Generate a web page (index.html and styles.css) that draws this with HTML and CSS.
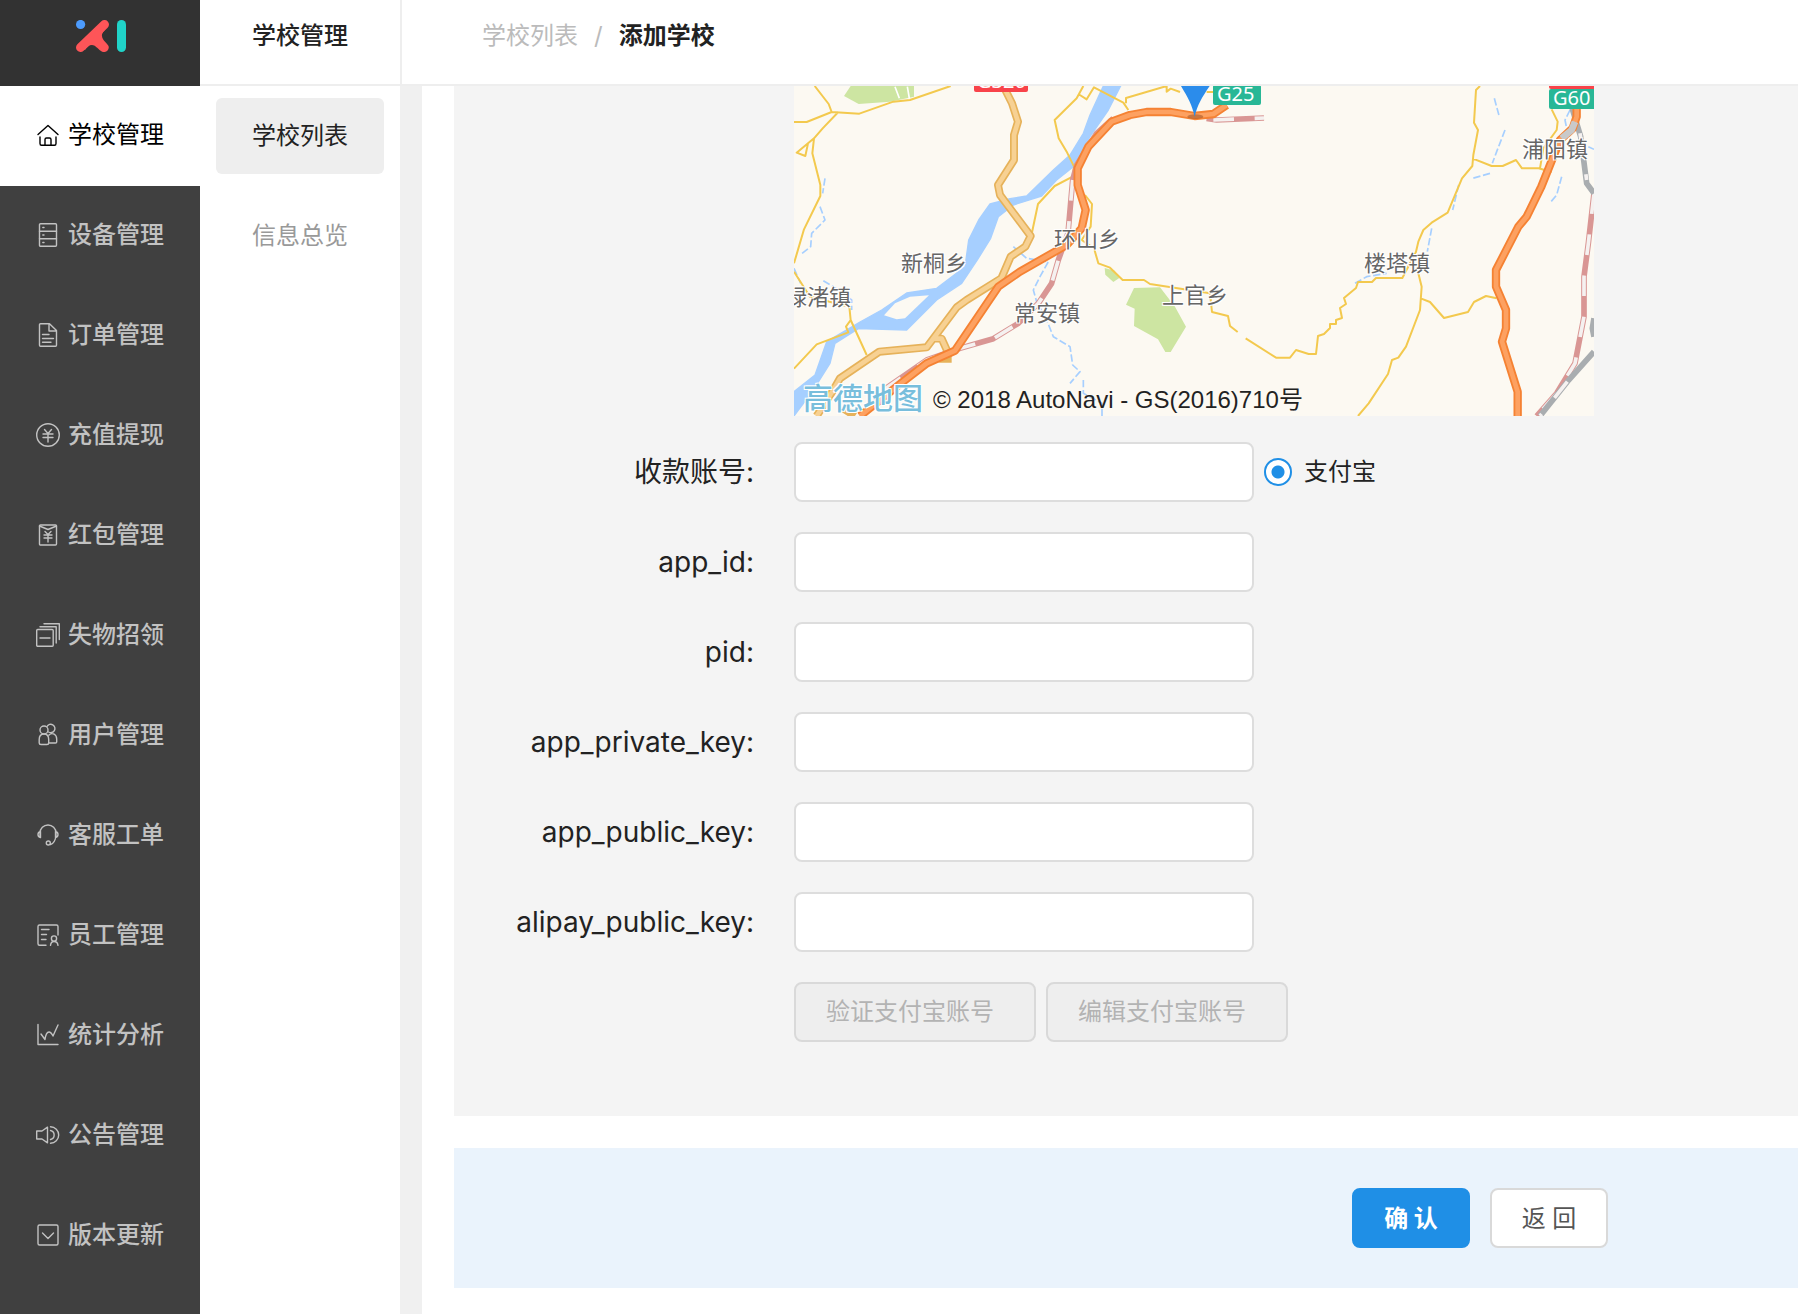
FILE: index.html
```html
<!DOCTYPE html>
<html lang="zh-CN">
<head>
<meta charset="utf-8">
<meta name="viewport" content="width=device-width, initial-scale=1">
<title>添加学校</title>
<link rel="stylesheet" href="styles.css">
</head>
<body>
<div class="app">
  <aside class="sidebar">
    <a class="logo" href="#" aria-label="首页">
      <svg width="50" height="32" viewBox="0 0 50 32">
        <circle cx="4.600" cy="4.500" r="4.600" fill="#4c9bfd"/>
        <path d="M4.500 27.500L28.500 4.500" fill="none" stroke="#fe5558" stroke-width="9" stroke-linecap="round"/>
        <path d="M20 12L29 5C33 8 25 12 26 16C26 20 32 24 32.500 26C34 30 29 34 25 31C21 28 19 25 16 25C13 25 11 27 9 30L5 27Z" fill="#fe5558"/>
        <rect x="41" y="0" width="9" height="32" rx="4.500" fill="#20d3c8"/>
      </svg>
    </a>
    <nav class="menu" aria-label="主菜单">
      <a class="menu-item is-active" href="#"><svg class="icon" viewBox="0 0 24 24"><path d="M2 11.500L12 2.500L22 11.500M4 14V20.500Q4 22.300 5.500 22.300H18.500Q20 22.300 20 20.500V14M9 22V16.500Q9 15 10.500 15H13.500Q15 15 15 16.500V22"/></svg>学校管理</a>
      <a class="menu-item" href="#"><svg class="icon" viewBox="0 0 24 24"><rect x="3.500" y=".7" width="17" height="22.600" rx="1"/><path d="M3.500 8.300H20.500M3.500 15.800H20.500M6.800 4.500H8M6.800 12H8M6.800 19.500H8"/></svg>设备管理</a>
      <a class="menu-item" href="#"><svg class="icon" viewBox="0 0 24 24"><path d="M13.500.7H4.500Q3.500.7 3.500 1.700V22.300Q3.500 23.300 4.500 23.300H19.500Q20.500 23.300 20.500 22.300V7.500ZM13 1V8H20.500M6.500 11.500H13M6.500 15.500H17.500M6.500 19.200H15"/></svg>订单管理</a>
      <a class="menu-item" href="#"><svg class="icon" viewBox="0 0 24 24"><circle cx="12" cy="12" r="11.300"/><path d="M8.500 6.500L12 10.500L15.500 6.500M7 11H17M7 14.500H17M12 10.500V19"/></svg>充值提现</a>
      <a class="menu-item" href="#"><svg class="icon" viewBox="0 0 24 24"><rect x="3.500" y="2" width="17" height="20" rx="1"/><path d="M3.500 3L12 6.500L20.500 3M9 8.500L12 11.500L15 8.500M8 12H16M8 15H16M12 11.500V19"/></svg>红包管理</a>
      <a class="menu-item" href="#"><svg class="icon" viewBox="0 0 24 24"><rect x=".7" y="6.500" width="16.500" height="16.700" rx="1"/><path d="M4 15H14M4 3.800H20.200V20M8 .7H23.300V16.500"/></svg>失物招领</a>
      <a class="menu-item" href="#"><svg class="icon" viewBox="0 0 24 24"><circle cx="8" cy="7" r="4"/><path d="M11 3.500A4.200 4.200 0 1 1 12.500 9M3.200 20V16.500Q3.200 11 8 11Q12.700 11 12.700 16.500V20Q12.700 21.500 11 21.500H5Q3.200 21.500 3.200 20ZM13 12Q15 10 18 11Q20.700 12.500 20.700 16V19Q20.700 20 19.500 20H13"/></svg>用户管理</a>
      <a class="menu-item" href="#"><svg class="icon" viewBox="0 0 24 24"><path d="M4 13V10A8 8 0 0 1 20 10V13Q19 20 14.500 21.500M4.500 8.500Q2 9 2 11.500Q2 14 4.500 14.500ZM19.500 8.500Q22 9 22 11.500Q22 14 19.500 14.500Z"/><circle cx="12.300" cy="20" r="2"/></svg>客服工单</a>
      <a class="menu-item" href="#"><svg class="icon" viewBox="0 0 24 24"><path d="M10 22.300H3.500Q2 22.300 2 20.800V3.500Q2 2 3.500 2H20.500Q22 2 22 3.500V12M5.500 6.500H13M5.500 11.500H10.500M5.500 16.500H10M14.500 22.300Q15 18.500 18 18.500Q21.500 18.500 22 22.300"/><circle cx="18" cy="15.500" r="2.600"/></svg>员工管理</a>
      <a class="menu-item" href="#"><svg class="icon" viewBox="0 0 24 24"><path d="M2 1.500V21.500H22M5 11L9 16.500Q10 9 13 9Q15 9 17 13L22 2"/></svg>统计分析</a>
      <a class="menu-item" href="#"><svg class="icon" viewBox="0 0 24 24"><path d="M.7 8H6L11.500 4.200V19.800L6 16H.7ZM14.500 7.500A4.600 4.600 0 0 1 14.500 16.500M14.500 3.800A8.200 8.200 0 0 1 14.500 20.200"/></svg>公告管理</a>
      <a class="menu-item" href="#"><svg class="icon" viewBox="0 0 24 24"><rect x="2" y="2" width="20" height="20" rx="1.500"/><path d="M6.500 10L12 15.500L17.500 10"/></svg>版本更新</a>
    </nav>
  </aside>

  <aside class="submenu">
    <h2 class="submenu-title">学校管理</h2>
    <nav class="submenu-list" aria-label="学校管理">
      <a class="submenu-item is-active" href="#">学校列表</a>
      <a class="submenu-item" href="#">信息总览</a>
    </nav>
  </aside>

  <div class="page">
    <header class="topbar">
      <a class="crumb" href="#">学校列表</a>
      <span class="crumb-sep">/</span>
      <strong class="crumb-current">添加学校</strong>
    </header>
    <main class="content">
      <form class="form">
        <section class="panel">
          <div class="map">
            <svg class="map-drawing" viewBox="42 48 2400 990" aria-hidden="true">
              <rect class="land" x="42" y="48" width="2400" height="990"/>
              <g class="green">
                <path d="M212 48L192 78L236 102L330 95L402 80V48Z"/>
                <path d="M1062 654L1140 652L1185 710L1218 770L1172 846H1156L1134 808L1062 768L1064 716L1038 704Z"/>
                <path d="M974 594L1004 602L1018 624L1000 636L976 614Z"/>
              </g>
              <path d="M345 50L358 85M382 50L388 85" stroke="#fff" stroke-width="5" fill="none"/>
              <g class="water">
                <path d="M970 48L930 135L910 190L870 255L820 300L740 378L690 386L630 402L596 450L566 510L555 590L470 655L380 669L305 720L240 756L140 815L105 915L42 965V1038L100 960L150 880L165 820L235 776L380 780L470 690L545 640L592 570L632 505L655 440L700 405L785 378L830 330L880 290L930 200L985 120L1022 48Z"/>
              </g>
              <path class="land" d="M312 736L345 700L390 680L447 676L375 745L350 748Z"/>
              <g class="stream">
                <path d="M135 325L128 370M120 410L135 450L95 490L92 530L60 555M42 595L62 640M130 632L160 650L215 690V720"/>
                <path d="M700 530L740 565L805 575L780 620L760 660L770 695L800 750L820 800L870 830L878 885L900 905L870 940M910 930V970L966 1000V1038"/>
                <path d="M2143 85L2158 140M2175 180L2150 245L2137 280M2130 310L2078 325M2036 345L2018 420M1955 475L1942 545M1725 640L1760 620L1820 610M2370 120L2355 150L2360 175M2345 320L2330 375L2313 395M2425 230L2442 238"/>
              </g>
              <g class="road">
                <path d="M104 48L146 102L155 126L80 156H42M155 126L238 131L340 95L390 90L512 48M175 126L128 175L102 205L97 250L121 345V378L72 478L42 580M102 205L50 248L76 258L84 220M42 605L90 680L208 710L212 750L260 855M42 896L110 823L205 787L198 770L212 750"/>
                <path d="M910 48L890 85L824 150L836 205L860 245L882 290L878 320L824 348L774 402L755 492M895 72L920 88L942 52L1030 98L1045 120M1038 100V84L1160 48V65L1172 56L1200 66M915 375L936 402L932 470L905 510L942 535L955 580L990 593L1028 630L1092 630L1110 642L1290 670L1296 726L1344 738L1350 768L1373 786M1397 805L1488 863H1530L1548 840L1586 852H1608L1614 798L1632 792L1650 774V762H1668V750L1686 744L1680 714L1698 702L1692 684L1728 654L1734 636H1776L1788 624H1867L1908 545L1915 515L1930 480L1955 458L2003 428L2046 325L2077 288L2080 255L2094 180L2082 158L2088 60L2100 48M2077 265L2135 288H2168L2208 270L2226 295H2276L2315 306M2280 295L2290 235L2330 180L2333 155L2315 118M1915 610L1925 650L1920 720L1878 830L1855 863L1836 870L1824 912L1766 1000L1734 1038M1922 685L1950 696L1992 744L2064 726L2082 696L2118 678L2150 685M1300 66H1280"/>
              </g>
              <g class="major">
                <path class="major-edge" d="M670 48L696 100L714 155L702 195V270L654 345L660 375L752 498L736 530L692 560L664 625L560 690L530 712L440 832L298 845L180 925L160 960L110 1038M460 805L485 806L505 850L480 866L515 866M190 1015L225 1038"/>
                <path class="major-fill" d="M670 48L696 100L714 155L702 195V270L654 345L660 375L752 498L736 530L692 560L664 625L560 690L530 712L440 832L298 845L180 925L160 960L110 1038M460 805L485 806L505 850"/>
              </g>
              <g class="rail">
                <path class="rail-edge" d="M1280 145L1310 150L1452 144M1000 145L950 190L890 285L878 330L864 490L835 570L815 640L775 700L715 760L640 806L540 835L440 870L310 960M2442 370L2425 520L2412 620V740L2385 880L2330 970L2270 1038"/>
                <path class="rail-gap" d="M1300 150L1452 144M878 330L864 490L835 570L815 640L775 700L715 760L640 806L540 835L440 870L310 960M2442 370L2425 520L2412 620V740L2385 880L2330 970L2270 1038"/>
              </g>
              <g class="rail rail-grey">
                <path class="rail-edge" d="M2375 110L2402 200L2420 340L2442 370M2442 745L2437 775L2442 800M2442 845L2362 935L2280 1038"/>
                <path class="rail-gap" d="M2400 190L2420 330M2362 935L2280 1038"/>
              </g>
              <g class="express">
                <path class="express-edge" d="M1340 105L1300 132L1244 138L1172 126H1100L1050 135L995 155L925 230L893 295V345L917 420L905 475L860 525L720 605L655 650L525 842L440 880L360 942L240 1038M2390 48V140L2378 175L2340 210L2308 290L2284 350L2240 440L2215 470L2148 600V650L2178 720V775L2166 815L2205 940L2213 965V1038"/>
                <path class="express-fill" d="M1340 105L1300 132L1244 138L1172 126H1100L1050 135L995 155L925 230L893 295V345L917 420L905 475L860 525L720 605L655 650L525 842L440 880L360 942L240 1038M2390 48V140L2378 175L2340 210L2308 290L2284 350L2240 440L2215 470L2148 600V650L2178 720V775L2166 815L2205 940L2213 965V1038"/>
              </g>
              <path d="M2385 155L2375 180L2345 205" fill="none" stroke="#c9c9c9" stroke-width="20"/>
              <ellipse cx="1246" cy="140" rx="24" ry="7" fill="#a65a2b" opacity=".6"/>
              <path d="M1203 48C1225 85 1236 105 1244 140C1252 105 1266 82 1289 48Z" fill="#2b8ceb"/>
            </svg>
            <span class="shield shield-red shield-g320">G320</span>
            <span class="shield shield-g25">G25</span>
            <span class="shield shield-red shield-top"></span>
            <span class="shield shield-g60">G60</span>
            <span class="place place-xintong">新桐乡</span>
            <span class="place place-huanshan">环山乡</span>
            <span class="place place-changan">常安镇</span>
            <span class="place place-luzhu">绿渚镇</span>
            <span class="place place-shangguan">上官乡</span>
            <span class="place place-louta">楼塔镇</span>
            <span class="place place-puyang">浦阳镇</span>
            <span class="map-brand">高德地图</span>
            <span class="map-copyright">© 2018 AutoNavi - GS(2016)710号</span>
          </div>
          <div class="row">
            <label class="label" for="account">收款账号:</label>
            <input class="input" id="account" type="text">
            <label class="radio"><input class="radio-dot" type="radio" name="channel" checked>支付宝</label>
          </div>
          <div class="row">
            <label class="label" for="app-id">app_id:</label>
            <input class="input" id="app-id" type="text">
          </div>
          <div class="row">
            <label class="label" for="pid">pid:</label>
            <input class="input" id="pid" type="text">
          </div>
          <div class="row">
            <label class="label" for="private-key">app_private_key:</label>
            <input class="input" id="private-key" type="text">
          </div>
          <div class="row">
            <label class="label" for="public-key">app_public_key:</label>
            <input class="input" id="public-key" type="text">
          </div>
          <div class="row">
            <label class="label" for="alipay-key">alipay_public_key:</label>
            <input class="input" id="alipay-key" type="text">
          </div>
          <div class="actions">
            <button class="button button-disabled" type="button" disabled>验证支付宝账号</button>
            <button class="button button-disabled" type="button" disabled>编辑支付宝账号</button>
          </div>
        </section>
        <footer class="form-footer">
          <button class="button button-primary" type="submit">确 认</button>
          <button class="button button-plain" type="button">返 回</button>
        </footer>
      </form>
    </main>
  </div>
</div>
</body>
</html>
```
FILE: styles.css
```css
* {
  box-sizing: border-box;
}

body {
  margin: 0;
  background: #fff;
  color: #222;
  font-family: Inter, "Noto Sans CJK SC", sans-serif;
  font-size: 24px;
  line-height: 36px;
}

a {
  color: inherit;
  text-decoration: none;
}

.app {
  display: flex;
  min-height: 100vh;
}

/* Primary navigation */
.sidebar {
  flex: 0 0 200px;
  background: #404040;
}

.logo {
  display: flex;
  justify-content: center;
  height: 86px;
  padding: 20px 0 0 2px;
  background: #323232;
}

.menu-item {
  display: flex;
  align-items: center;
  gap: 8px;
  height: 100px;
  padding: 0 0 2px 36px;
  color: #c2c2c2;
  font-weight: 500;
}

.menu-item.is-active {
  background: #fff;
  color: #000;
  font-weight: 400;
}

.icon {
  width: 24px;
  height: 24px;
  fill: none;
  stroke: currentColor;
  stroke-width: 1.4;
  stroke-linecap: round;
  stroke-linejoin: round;
}

/* Secondary navigation */
.submenu {
  flex: 0 0 200px;
}

.submenu-title {
  height: 86px;
  margin: 0;
  padding-top: 18px;
  border-bottom: 2px solid #eee;
  font-size: 24px;
  font-weight: 500;
  text-align: center;
}

.submenu-list {
  display: grid;
  gap: 24px;
  padding: 12px 16px;
}

.submenu-item {
  padding: 20px 0;
  border-radius: 6px;
  color: #999;
  text-align: center;
}

.submenu-item.is-active {
  background: #eee;
  color: #222;
}

/* Page */
.page {
  display: flex;
  flex: 1;
  flex-direction: column;
  min-width: 0;
}

.topbar {
  display: flex;
  gap: 16px;
  height: 86px;
  padding: 18px 80px;
  border-bottom: 2px solid #eee;
  border-left: 2px solid #eee;
}

.crumb,
.crumb-sep {
  color: #bbb;
}

.crumb-current {
  font-weight: 700;
}

.content {
  flex: 1;
  padding-left: 32px;
  border-left: 22px solid #f0f0f0;
}

.panel {
  padding-bottom: 74px;
  background: #f4f4f4;
}

.row {
  display: flex;
  align-items: center;
  margin-bottom: 30px;
}

.label {
  width: 300px;
  margin-right: 40px;
  font-size: 28px;
  text-align: right;
}

.input {
  width: 460px;
  height: 60px;
  padding: 0 16px;
  border: 2px solid #ddd;
  border-radius: 8px;
  background: #fff;
  font: inherit;
}

.radio {
  display: flex;
  align-items: center;
  gap: 12px;
  margin-left: 10px;
}

.radio-dot {
  width: 28px;
  height: 28px;
  margin: 0;
  border: 2px solid #1f8fe6;
  border-radius: 50%;
  background: radial-gradient(circle, #1f8fe6 6px, #fff 7px);
  appearance: none;
}

.actions {
  display: flex;
  gap: 10px;
  margin-left: 340px;
}

.button {
  height: 60px;
  border: 2px solid #d9d9d9;
  border-radius: 8px;
  font: inherit;
  white-space: nowrap;
}

.button-disabled {
  padding: 0 40px 0 30px;
  background: #eee;
  color: #b3b3b3;
}

.button-primary,
.button-plain {
  width: 118px;
  padding: 2px 0 0;
}

.button-primary {
  border-color: #1f8fe6;
  background: #1f8fe6;
  color: #fff;
  font-weight: 700;
}

.button-plain {
  background: #fff;
  color: #555;
}

.form-footer {
  display: flex;
  justify-content: flex-end;
  gap: 20px;
  margin-top: 32px;
  padding: 40px 190px;
  background: #eaf3fc;
}

/* Map */
.map {
  position: relative;
  width: 800px;
  margin: 0 0 26px 340px;
  overflow: hidden;
}

.map-drawing {
  display: block;
  width: 100%;
  fill: none;
  stroke-linejoin: round;
}

.land {
  fill: #fcf9f2;
}

.green {
  fill: #cde5a2;
}

.water {
  fill: #a6cfff;
  stroke: #a6cfff;
  stroke-width: 4;
}

.stream {
  stroke: #a6cfff;
  stroke-width: 5;
  stroke-dasharray: 22 8;
}

.road {
  stroke: #f3c94e;
  stroke-width: 6;
}

.major-edge {
  stroke: #e6b25a;
  stroke-width: 24;
}

.major-fill {
  stroke: #f7d193;
  stroke-width: 14;
}

.express-edge {
  stroke: #f58233;
  stroke-width: 25;
}

.express-fill {
  stroke: #fda161;
  stroke-width: 14;
}

.rail-edge {
  stroke: #d99694;
  stroke-width: 17;
}

.rail-gap {
  stroke: #f5f1f0;
  stroke-width: 11;
  stroke-dasharray: 62 62;
}

.rail-grey .rail-edge {
  stroke: #a9adb0;
}

.place,
.shield,
.map-brand,
.map-copyright {
  position: absolute;
  white-space: nowrap;
}

.place {
  color: #666;
  font-size: 22px;
  line-height: 24px;
  text-shadow: 1px 1px #fff, -1px 1px #fff, 1px -1px #fff, -1px -1px #fff;
}

.place-xintong { left: 107px; top: 165px; }
.place-huanshan { left: 260px; top: 141px; }
.place-changan { left: 220px; top: 215px; }
.place-luzhu { left: -9px; top: 199px; }
.place-shangguan { left: 368px; top: 197px; }
.place-louta { left: 570px; top: 165px; }
.place-puyang { left: 728px; top: 51px; }

.shield {
  height: 20px;
  padding: 0 4px;
  border-radius: 2px;
  background: #28b796;
  color: #fff;
  font-family: "Noto Sans", sans-serif;
  font-size: 20px;
  line-height: 18px;
}

.shield-red {
  background: #f8434a;
}

.shield-g320 { left: 180px; top: -14px; width: 54px; padding: 0 3px; }
.shield-g25 { left: 419px; top: -1px; width: 48px; }
.shield-g60 { left: 755px; top: 3px; width: 48px; }
.shield-top { left: 755px; top: -17px; width: 48px; }

.map-brand {
  left: 9px;
  top: 294px;
  color: #78bedc;
  font-size: 30px;
  font-weight: 500;
  text-shadow: 1px 1px #fff, -1px 1px #fff, 1px -1px #fff, -1px -1px #fff;
}

.map-copyright {
  left: 139px;
  top: 296px;
  font-family: "Liberation Sans", "Noto Sans CJK SC", sans-serif;
}
```
